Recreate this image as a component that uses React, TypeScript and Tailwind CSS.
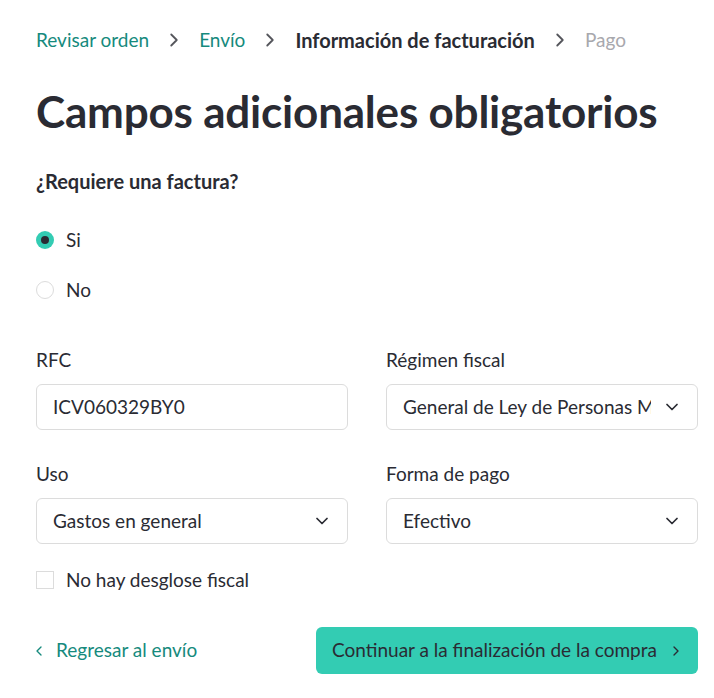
import { ChevronRight, ChevronLeft, ChevronDown } from 'lucide-react';

const steps = [
  { label: 'Revisar orden', state: 'done' },
  { label: 'Envío', state: 'done' },
  { label: 'Información de facturación', state: 'current' },
  { label: 'Pago', state: 'todo' },
];

function Select({ value }: { value: string }) {
  return (
    <div className="flex h-[46px] items-center rounded-md border border-[#dcdcdc] bg-white pl-4 pr-[15px]">
      <span className="flex-1 overflow-hidden whitespace-nowrap text-[19px] text-[#2a2b33]">{value}</span>
      <ChevronDown size={20} strokeWidth={2.1} className="ml-[11px] shrink-0 text-[#2a2b33]" />
    </div>
  );
}

export default function App() {
  return (
    <div className="min-h-[698px] bg-white pl-[36px] text-[#2a2b33]" style={{ fontFamily: 'Lato, "Noto Sans", sans-serif' }}>
      <div className="w-[662px] pt-[27px]">
        {/* Breadcrumb */}
        <nav className="flex h-[26px] items-center text-[19px]">
          {steps.map((s, i) => (
            <div key={s.label} className="flex items-center">
              <span
                className={
                  s.state === 'done'
                    ? 'text-[#168a7d]'
                    : s.state === 'current'
                      ? 'text-[20px] font-bold text-[#2a2b33]'
                      : 'text-[#a8a8ad]'
                }
              >
                {s.label}
              </span>
              {i < steps.length - 1 && (
                <ChevronRight size={22} strokeWidth={2} className="mx-[14px] text-[#55565c]" />
              )}
            </div>
          ))}
        </nav>

        <h1 className="mt-[31px] text-[44px] font-bold leading-[54px] tracking-[-0.2px]">
          Campos adicionales obligatorios
        </h1>

        <p className="mt-[30px] text-[20px] font-bold leading-[26px]">¿Requiere una factura?</p>

        {/* Radios */}
        <div className="mt-[33px] flex flex-col gap-[24px]">
          <label className="flex h-[26px] items-center gap-[12px] text-[19px]">
            <span className="flex h-[18px] w-[18px] items-center justify-center rounded-full bg-[#33ccb3]">
              <span className="h-[8px] w-[8px] rounded-full bg-[#2a2b33]" />
            </span>
            Si
          </label>
          <label className="flex h-[26px] items-center gap-[12px] text-[19px]">
            <span className="h-[18px] w-[18px] rounded-full border border-[#dcdcdc]" />
            No
          </label>
        </div>

        {/* Fields */}
        <div className="mt-[44px] grid grid-cols-2 gap-x-[38px] gap-y-[31px]">
          <div>
            <div className="mb-[11px] text-[19px] leading-[26px]">RFC</div>
            <div className="flex h-[46px] items-center rounded-md border border-[#dcdcdc] px-4 text-[19px]">
              ICV060329BY0
            </div>
          </div>
          <div>
            <div className="mb-[11px] text-[19px] leading-[26px]">Régimen fiscal</div>
            <Select value="General de Ley de Personas Morales" />
          </div>
          <div>
            <div className="mb-[11px] text-[19px] leading-[26px]">Uso</div>
            <Select value="Gastos en general" />
          </div>
          <div>
            <div className="mb-[11px] text-[19px] leading-[26px]">Forma de pago</div>
            <Select value="Efectivo" />
          </div>
        </div>

        <label className="mt-[23px] flex h-[26px] items-center gap-[12px] text-[19px]">
          <span className="h-[18px] w-[18px] border border-[#dcdcdc]" />
          No hay desglose fiscal
        </label>

        {/* Actions */}
        <div className="mt-[34px] flex items-center justify-between">
          <a className="-ml-[5px] flex items-center gap-[9px] text-[19px] text-[#168a7d]">
            <ChevronLeft size={16} strokeWidth={2} />
            Regresar al envío
          </a>
          <button className="flex h-[47px] w-[382px] items-center justify-between rounded-md bg-[#33ccb3] pl-4 pr-[14px] text-[19px] text-[#2a2b33]">
            <span className="whitespace-nowrap">Continuar a la finalización de la compra</span>
            <ChevronRight size={16} strokeWidth={2} />
          </button>
        </div>
      </div>
    </div>
  );
}
